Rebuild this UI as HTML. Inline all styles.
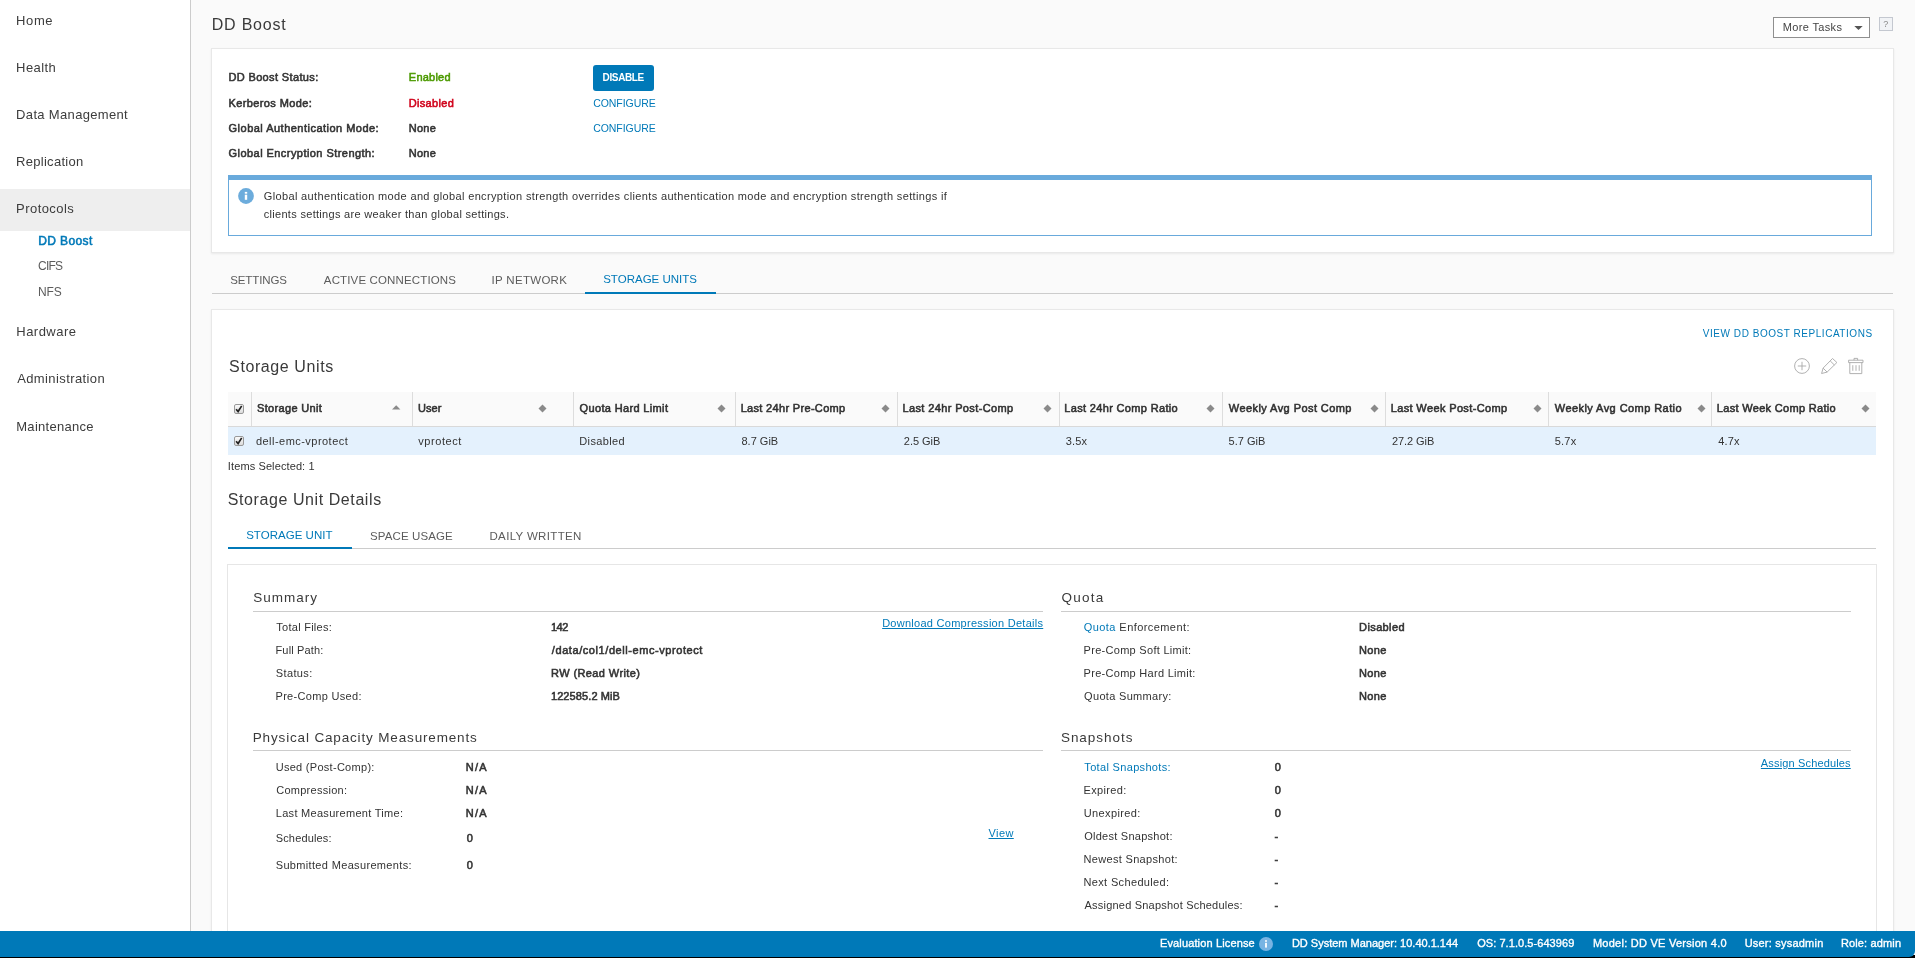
<!DOCTYPE html>
<html lang="en"><head><meta charset="utf-8"><title>DD System Manager - DD Boost</title>
<style>
html,body{margin:0;padding:0}
body{width:1915px;height:958px;overflow:hidden;position:relative;background:#fafafa;font-family:"Liberation Sans",sans-serif;color:#333}
#app{position:absolute;left:0;top:0;width:1915px;height:958px;overflow:hidden;will-change:transform}
.a{position:absolute}
.t{position:absolute;white-space:nowrap;line-height:1;margin:0;padding:0;font-weight:400;text-decoration:none;display:block}
nav,main,section,header,footer,ul,li{display:block;margin:0;padding:0;list-style:none}
.sb{-webkit-text-stroke:0.55px}
.card{position:absolute;background:#fff;border:1px solid #e8e8e8;box-shadow:0 1px 2px rgba(0,0,0,.07);box-sizing:border-box}
.ln{position:absolute;height:1px;background:#ccc}
.sep{position:absolute;top:392px;width:1px;height:34px;background:#ddd}
.cb{position:absolute;left:234px;width:10px;height:10px;box-sizing:border-box;border:1px solid #999;border-radius:2px;background:linear-gradient(#fafafa,#dcdcdc)}
.cb svg{position:absolute;left:-2px;top:-2px}
</style></head>
<body><div id="app">
<nav id="sidenav" aria-label="Main navigation">
<div class="a" style="left:0;top:0;width:190px;height:931px;background:#fff;border-right:1px solid #ccc"></div>
<div class="a" style="left:0;top:189px;width:190px;height:42px;background:#eee"></div>
<a class="t" style="left:16.12px;top:14px;font-size:13px;color:#3c3c3c;letter-spacing:0.601px">Home</a>
<a class="t" style="left:16.12px;top:61px;font-size:13px;color:#3c3c3c;letter-spacing:0.428px">Health</a>
<a class="t" style="left:16.12px;top:108px;font-size:13px;color:#3c3c3c;letter-spacing:0.333px">Data Management</a>
<a class="t" style="left:16.12px;top:155px;font-size:13px;color:#3c3c3c;letter-spacing:0.276px">Replication</a>
<a class="t" style="left:16.12px;top:202px;font-size:13px;color:#3c3c3c;letter-spacing:0.429px">Protocols</a>
<a class="t sb" style="left:38.34px;top:235px;font-size:12px;color:#0079b8;letter-spacing:0.371px">DD Boost</a>
<a class="t" style="left:38.05px;top:260px;font-size:12px;color:#5c5c5c;letter-spacing:-0.751px">CIFS</a>
<a class="t" style="left:37.94px;top:286px;font-size:12px;color:#5c5c5c;letter-spacing:-0.111px">NFS</a>
<a class="t" style="left:16.27px;top:325px;font-size:13px;color:#3c3c3c;letter-spacing:0.472px">Hardware</a>
<a class="t" style="left:17.13px;top:372px;font-size:13px;color:#3c3c3c;letter-spacing:0.399px">Administration</a>
<a class="t" style="left:16.27px;top:420px;font-size:13px;color:#3c3c3c;letter-spacing:0.278px">Maintenance</a>
</nav>
<main id="content">
<header id="page-header">
<div class="a" style="left:1773px;top:17px;width:97px;height:21px;box-sizing:border-box;border:1px solid #8f8f8f;background:#fff"></div>
<svg class="a" style="left:1854px;top:26px" width="9" height="4" viewBox="0 0 9 4"><path d="M0.3 0h8.4L4.5 4z" fill="#555"/></svg>
<div class="a" style="left:1879px;top:17px;width:14px;height:14px;box-sizing:border-box;border:1px solid #c4c8d0;background:#f1f3f6"></div>
<h1 class="t" style="left:211.66px;top:17px;font-size:16px;color:#3a3a3a;letter-spacing:0.808px">DD Boost</h1>
<span class="t" role="button" style="left:1782.68px;top:22px;font-size:11px;color:#444;letter-spacing:0.364px">More Tasks</span>
<span class="t" role="button" style="left:1883.20px;top:20px;font-size:9px;color:#8a8a8a">?</span>
</header>
<section id="boost-status" aria-label="DD Boost status">
<div class="card" style="left:211px;top:48px;width:1683px;height:205px"></div>
<div class="a" style="left:593px;top:65px;width:61px;height:26px;border-radius:3px;background:#0079b8"></div>
<div class="a" style="left:228px;top:175px;width:1644px;height:61px;box-sizing:border-box;border:1px solid #69aadc;border-top-width:5px;background:#fff"></div>
<svg class="a" style="left:238px;top:188px" width="16" height="16" viewBox="0 0 16 16"><circle cx="8" cy="8" r="7.9" fill="#6cacdc"/><rect x="6.8" y="3.9" width="2.4" height="1.8" fill="#fff"/><rect x="6.8" y="6.7" width="2.4" height="5.1" fill="#fff"/></svg>
<span class="t sb" style="left:228.41px;top:72px;font-size:11px;color:#333;letter-spacing:0.364px">DD Boost Status:</span>
<span class="t sb" style="left:228.42px;top:98px;font-size:11px;color:#333;letter-spacing:0.400px">Kerberos Mode:</span>
<span class="t sb" style="left:228.59px;top:123px;font-size:11px;color:#333;letter-spacing:0.481px">Global Authentication Mode:</span>
<span class="t sb" style="left:228.59px;top:148px;font-size:11px;color:#333;letter-spacing:0.443px">Global Encryption Strength:</span>
<span class="t sb" style="left:408.82px;top:72px;font-size:11px;color:#4c9a00;letter-spacing:0.232px">Enabled</span>
<span class="t sb" style="left:408.66px;top:98px;font-size:11px;color:#d0021b;letter-spacing:0.357px">Disabled</span>
<span class="t sb" style="left:408.67px;top:123px;font-size:11px;color:#333;letter-spacing:0.283px">None</span>
<span class="t sb" style="left:408.67px;top:148px;font-size:11px;color:#333;letter-spacing:0.283px">None</span>
<span class="t" role="button" style="left:602.56px;top:73px;font-size:10px;color:#fff;letter-spacing:-0.358px;font-weight:700">DISABLE</span>
<a class="t" style="left:593.15px;top:98px;font-size:10.5px;color:#0079b8;letter-spacing:-0.047px">CONFIGURE</a>
<a class="t" style="left:593.15px;top:123px;font-size:10.5px;color:#0079b8;letter-spacing:-0.047px">CONFIGURE</a>
<p class="t" style="left:263.78px;top:191px;font-size:11px;color:#333;letter-spacing:0.358px">Global authentication mode and global encryption strength overrides clients authentication mode and encryption strength settings if</p>
<p class="t" style="left:263.71px;top:209px;font-size:11px;color:#333;letter-spacing:0.307px">clients settings are weaker than global settings.</p>
</section>
<nav id="boost-tabs" role="tablist">
<div class="ln" style="left:212px;top:293px;width:1681px"></div>
<div class="a" style="left:585px;top:292px;width:131px;height:2px;background:#0079b8"></div>
<a class="t" role="tab" style="left:230.19px;top:275px;font-size:11.5px;color:#5c5c5c;letter-spacing:-0.109px">SETTINGS</a>
<a class="t" role="tab" style="left:323.87px;top:275px;font-size:11.5px;color:#5c5c5c;letter-spacing:0.142px">ACTIVE CONNECTIONS</a>
<a class="t" role="tab" style="left:491.60px;top:275px;font-size:11.5px;color:#5c5c5c;letter-spacing:0.297px">IP NETWORK</a>
<a class="t" role="tab" style="left:603.20px;top:274px;font-size:11.5px;color:#0079b8;letter-spacing:0.008px">STORAGE UNITS</a>
</nav>
<section id="storage-units" role="tabpanel">
<div class="card" style="left:211px;top:309px;width:1683px;height:700px"></div>
<svg class="a" style="left:1793px;top:357px" width="18" height="18" viewBox="0 0 18 18" fill="none" stroke="#a8a8a8" stroke-width="0.9"><circle cx="9" cy="9" r="7.4"/><path d="M9 4.8v8.4M4.8 9h8.4"/></svg>
<svg class="a" style="left:1820px;top:357px" width="18" height="18" viewBox="0 0 18 18" fill="none" stroke="#a8a8a8" stroke-width="0.9" stroke-linejoin="round"><path d="M1.6 16.5L3.1 11.1L12.5 1.5L16.9 5.5L7.1 15.1z"/><path d="M3.1 11.1L7.1 15.1M10.3 4L14.4 8"/></svg>
<svg class="a" style="left:1847px;top:357px" width="18" height="18" viewBox="0 0 18 18" fill="none" stroke="#a8a8a8" stroke-width="0.9"><path d="M1.6 3.2h14.4v2.4H1.6z"/><path d="M7 3.2V1.4h3.6v1.8"/><path d="M2.8 5.6v11h12v-11"/><path d="M5.8 8.2v5.6M9 8.2v5.6M12.2 8.2v5.6"/></svg>
<a class="t" style="left:1702.85px;top:329px;font-size:10px;color:#0079b8;letter-spacing:0.539px">VIEW DD BOOST REPLICATIONS</a>
<h2 class="t" style="left:229.12px;top:359px;font-size:16px;color:#3a3a3a;letter-spacing:0.595px">Storage Units</h2>
<div id="su-grid" role="table" aria-label="Storage Units">
<div role="row" class="su-head">
<div class="a" style="left:228px;top:392px;width:1648px;height:34px;background:#fafafa;border-bottom:1px solid #d9d9d9"></div>
<div class="sep" style="left:251px"></div>
<div class="sep" style="left:412px"></div>
<div class="sep" style="left:573px"></div>
<div class="sep" style="left:735px"></div>
<div class="sep" style="left:897px"></div>
<div class="sep" style="left:1059px"></div>
<div class="sep" style="left:1222px"></div>
<div class="sep" style="left:1385px"></div>
<div class="sep" style="left:1548px"></div>
<div class="sep" style="left:1711px"></div>
<svg class="a" style="left:392px;top:405px" width="9" height="5" viewBox="0 0 9 5"><path d="M0 4.6h8.4L4.2 0.2z" fill="#8a8a8a"/></svg>
<svg class="a" style="left:538.2px;top:404px" width="9" height="9" viewBox="0 0 9 9"><path d="M4.5 0.5l4 4-4 4-4-4z" fill="#8a8a8a"/></svg>
<svg class="a" style="left:717.3px;top:404px" width="9" height="9" viewBox="0 0 9 9"><path d="M4.5 0.5l4 4-4 4-4-4z" fill="#8a8a8a"/></svg>
<svg class="a" style="left:880.8px;top:404px" width="9" height="9" viewBox="0 0 9 9"><path d="M4.5 0.5l4 4-4 4-4-4z" fill="#8a8a8a"/></svg>
<svg class="a" style="left:1043.1px;top:404px" width="9" height="9" viewBox="0 0 9 9"><path d="M4.5 0.5l4 4-4 4-4-4z" fill="#8a8a8a"/></svg>
<svg class="a" style="left:1206.2px;top:404px" width="9" height="9" viewBox="0 0 9 9"><path d="M4.5 0.5l4 4-4 4-4-4z" fill="#8a8a8a"/></svg>
<svg class="a" style="left:1370.1px;top:404px" width="9" height="9" viewBox="0 0 9 9"><path d="M4.5 0.5l4 4-4 4-4-4z" fill="#8a8a8a"/></svg>
<svg class="a" style="left:1533.3px;top:404px" width="9" height="9" viewBox="0 0 9 9"><path d="M4.5 0.5l4 4-4 4-4-4z" fill="#8a8a8a"/></svg>
<svg class="a" style="left:1696.5px;top:404px" width="9" height="9" viewBox="0 0 9 9"><path d="M4.5 0.5l4 4-4 4-4-4z" fill="#8a8a8a"/></svg>
<svg class="a" style="left:1861.1px;top:404px" width="9" height="9" viewBox="0 0 9 9"><path d="M4.5 0.5l4 4-4 4-4-4z" fill="#8a8a8a"/></svg>
<div class="cb" style="top:404px"><svg width="12" height="12" viewBox="0 0 12 12"><path d="M3.1 6.2l2 2.3 3.6-5.6" fill="none" stroke="#222" stroke-width="1.7"/></svg></div>
<div class="t sb" role="columnheader" style="left:256.96px;top:403px;font-size:11px;color:#313131;letter-spacing:0.337px">Storage Unit</div>
<div class="t sb" role="columnheader" style="left:418.12px;top:403px;font-size:11px;color:#313131">User</div>
<div class="t sb" role="columnheader" style="left:579.55px;top:403px;font-size:11px;color:#313131;letter-spacing:0.352px">Quota Hard Limit</div>
<div class="t sb" role="columnheader" style="left:740.68px;top:403px;font-size:11px;color:#313131;letter-spacing:0.321px">Last 24hr Pre-Comp</div>
<div class="t sb" role="columnheader" style="left:902.50px;top:403px;font-size:11px;color:#313131;letter-spacing:0.372px">Last 24hr Post-Comp</div>
<div class="t sb" role="columnheader" style="left:1064.28px;top:403px;font-size:11px;color:#313131;letter-spacing:0.339px">Last 24hr Comp Ratio</div>
<div class="t sb" role="columnheader" style="left:1228.78px;top:403px;font-size:11px;color:#313131;letter-spacing:0.431px">Weekly Avg Post Comp</div>
<div class="t sb" role="columnheader" style="left:1390.68px;top:403px;font-size:11px;color:#313131;letter-spacing:0.368px">Last Week Post-Comp</div>
<div class="t sb" role="columnheader" style="left:1554.78px;top:403px;font-size:11px;color:#313131;letter-spacing:0.432px">Weekly Avg Comp Ratio</div>
<div class="t sb" role="columnheader" style="left:1716.79px;top:403px;font-size:11px;color:#313131;letter-spacing:0.315px">Last Week Comp Ratio</div>
</div>
<div role="row" class="su-row" aria-selected="true">
<div class="a" style="left:228px;top:427px;width:1648px;height:28px;background:#e4f1fd"></div>
<div class="cb" style="top:436px"><svg width="12" height="12" viewBox="0 0 12 12"><path d="M3.1 6.2l2 2.3 3.6-5.6" fill="none" stroke="#222" stroke-width="1.7"/></svg></div>
<div class="t" role="cell" style="left:255.94px;top:436px;font-size:11px;color:#333;letter-spacing:0.465px">dell-emc-vprotect</div>
<div class="t" role="cell" style="left:418.30px;top:436px;font-size:11px;color:#333;letter-spacing:0.554px">vprotect</div>
<div class="t" role="cell" style="left:579.27px;top:436px;font-size:11px;color:#333;letter-spacing:0.365px">Disabled</div>
<div class="t" role="cell" style="left:741.47px;top:436px;font-size:11px;color:#333;letter-spacing:0.009px">8.7 GiB</div>
<div class="t" role="cell" style="left:903.86px;top:436px;font-size:11px;color:#333;letter-spacing:-0.042px">2.5 GiB</div>
<div class="t" role="cell" style="left:1065.69px;top:436px;font-size:11px;color:#333;letter-spacing:0.194px">3.5x</div>
<div class="t" role="cell" style="left:1228.54px;top:436px;font-size:11px;color:#333;letter-spacing:0.012px">5.7 GiB</div>
<div class="t" role="cell" style="left:1391.99px;top:436px;font-size:11px;color:#333;letter-spacing:-0.082px">27.2 GiB</div>
<div class="t" role="cell" style="left:1554.69px;top:436px;font-size:11px;color:#333;letter-spacing:0.235px">5.7x</div>
<div class="t" role="cell" style="left:1718.20px;top:436px;font-size:11px;color:#333;letter-spacing:0.140px">4.7x</div>
</div>
</div>
<span class="t" style="left:227.86px;top:461px;font-size:11px;color:#333;letter-spacing:0.107px">Items Selected: 1</span>
<section id="su-details" aria-label="Storage Unit Details">
<div class="ln" style="left:228px;top:548px;width:1648px"></div>
<div class="a" style="left:228px;top:547px;width:124px;height:2px;background:#0079b8"></div>
<div class="a" style="left:227px;top:564px;width:1650px;height:420px;box-sizing:border-box;border:1px solid #e6e6e6;background:#fff"></div>
<div class="ln" style="left:253px;top:611px;width:790px"></div>
<div class="ln" style="left:1061px;top:611px;width:790px"></div>
<div class="ln" style="left:253px;top:750px;width:790px"></div>
<div class="ln" style="left:1061px;top:750px;width:790px"></div>
<h2 class="t" style="left:227.74px;top:492px;font-size:16px;color:#3a3a3a;letter-spacing:0.585px">Storage Unit Details</h2>
<a class="t" role="tab" style="left:246.18px;top:530px;font-size:11.5px;color:#0079b8;letter-spacing:0.023px">STORAGE UNIT</a>
<a class="t" role="tab" style="left:369.96px;top:531px;font-size:11.5px;color:#5c5c5c;letter-spacing:0.124px">SPACE USAGE</a>
<a class="t" role="tab" style="left:489.47px;top:531px;font-size:11.5px;color:#5c5c5c;letter-spacing:0.341px">DAILY WRITTEN</a>
<h3 class="t" style="left:253.27px;top:591px;font-size:13.5px;color:#3a3a3a;letter-spacing:0.980px">Summary</h3>
<h3 class="t" style="left:1061.38px;top:591px;font-size:13.5px;color:#3a3a3a;letter-spacing:1.285px">Quota</h3>
<h3 class="t" style="left:252.78px;top:731px;font-size:13.5px;color:#3a3a3a;letter-spacing:0.844px">Physical Capacity Measurements</h3>
<h3 class="t" style="left:1060.95px;top:731px;font-size:13.5px;color:#3a3a3a;letter-spacing:0.962px">Snapshots</h3>
<span class="t" style="left:276.34px;top:622px;font-size:11px;color:#333;letter-spacing:0.258px">Total Files:</span>
<span class="t" style="left:275.49px;top:645px;font-size:11px;color:#333;letter-spacing:0.164px">Full Path:</span>
<span class="t" style="left:275.71px;top:668px;font-size:11px;color:#333;letter-spacing:0.390px">Status:</span>
<span class="t" style="left:275.49px;top:691px;font-size:11px;color:#333;letter-spacing:0.313px">Pre-Comp Used:</span>
<span class="t sb" style="left:550.94px;top:622px;font-size:11px;color:#333;letter-spacing:-0.448px">142</span>
<span class="t sb" style="left:551.83px;top:645px;font-size:11px;color:#333;letter-spacing:0.572px">/data/col1/dell-emc-vprotect</span>
<span class="t sb" style="left:551.01px;top:668px;font-size:11px;color:#333;letter-spacing:0.403px">RW (Read Write)</span>
<span class="t sb" style="left:550.94px;top:691px;font-size:11px;color:#333;letter-spacing:0.100px">122585.2 MiB</span>
<a class="t" style="left:882.17px;top:618px;font-size:11px;color:#0079b8;letter-spacing:0.272px;text-decoration:underline">Download Compression Details</a>
<span class="t" style="left:275.67px;top:762px;font-size:11px;color:#333;letter-spacing:0.287px">Used (Post-Comp):</span>
<span class="t" style="left:276.19px;top:785px;font-size:11px;color:#333;letter-spacing:0.267px">Compression:</span>
<span class="t" style="left:275.80px;top:808px;font-size:11px;color:#333;letter-spacing:0.291px">Last Measurement Time:</span>
<span class="t" style="left:275.72px;top:833px;font-size:11px;color:#333;letter-spacing:0.157px">Schedules:</span>
<span class="t" style="left:275.71px;top:860px;font-size:11px;color:#333;letter-spacing:0.339px">Submitted Measurements:</span>
<span class="t sb" style="left:465.79px;top:762px;font-size:11px;color:#333;letter-spacing:1.197px">N/A</span>
<span class="t sb" style="left:465.79px;top:785px;font-size:11px;color:#333;letter-spacing:1.197px">N/A</span>
<span class="t sb" style="left:465.79px;top:808px;font-size:11px;color:#333;letter-spacing:1.197px">N/A</span>
<span class="t sb" style="left:466.72px;top:833px;font-size:11px;color:#333">0</span>
<span class="t sb" style="left:466.72px;top:860px;font-size:11px;color:#333">0</span>
<a class="t" style="left:988.50px;top:828px;font-size:11px;color:#0079b8;letter-spacing:0.404px;text-decoration:underline">View</a>
<span class="t" style="left:1083.80px;top:622px;font-size:11px;color:#333;letter-spacing:0.425px"><span style="color:#0079b8">Quota</span> Enforcement:</span>
<span class="t" style="left:1083.62px;top:645px;font-size:11px;color:#333;letter-spacing:0.285px">Pre-Comp Soft Limit:</span>
<span class="t" style="left:1083.62px;top:668px;font-size:11px;color:#333;letter-spacing:0.283px">Pre-Comp Hard Limit:</span>
<span class="t" style="left:1084.08px;top:691px;font-size:11px;color:#333;letter-spacing:0.317px">Quota Summary:</span>
<span class="t sb" style="left:1359.11px;top:622px;font-size:11px;color:#333;letter-spacing:0.377px">Disabled</span>
<span class="t sb" style="left:1359.11px;top:645px;font-size:11px;color:#333;letter-spacing:0.301px">None</span>
<span class="t sb" style="left:1359.11px;top:668px;font-size:11px;color:#333;letter-spacing:0.301px">None</span>
<span class="t sb" style="left:1359.11px;top:691px;font-size:11px;color:#333;letter-spacing:0.301px">None</span>
<span class="t" style="left:1084.36px;top:762px;font-size:11px;color:#0079b8;letter-spacing:0.323px">Total Snapshots:</span>
<span class="t" style="left:1083.49px;top:785px;font-size:11px;color:#333;letter-spacing:0.349px">Expired:</span>
<span class="t" style="left:1083.68px;top:808px;font-size:11px;color:#333;letter-spacing:0.393px">Unexpired:</span>
<span class="t" style="left:1084.17px;top:831px;font-size:11px;color:#333;letter-spacing:0.260px">Oldest Snapshot:</span>
<span class="t" style="left:1083.50px;top:854px;font-size:11px;color:#333;letter-spacing:0.322px">Newest Snapshot:</span>
<span class="t" style="left:1083.50px;top:877px;font-size:11px;color:#333;letter-spacing:0.349px">Next Scheduled:</span>
<span class="t" style="left:1084.54px;top:900px;font-size:11px;color:#333;letter-spacing:0.211px">Assigned Snapshot Schedules:</span>
<span class="t sb" style="left:1274.72px;top:762px;font-size:11px;color:#333">0</span>
<span class="t sb" style="left:1274.72px;top:785px;font-size:11px;color:#333">0</span>
<span class="t sb" style="left:1274.72px;top:808px;font-size:11px;color:#333">0</span>
<span class="t sb" style="left:1274.61px;top:831px;font-size:11px;color:#333">-</span>
<span class="t sb" style="left:1274.61px;top:854px;font-size:11px;color:#333">-</span>
<span class="t sb" style="left:1274.61px;top:877px;font-size:11px;color:#333">-</span>
<span class="t sb" style="left:1274.61px;top:900px;font-size:11px;color:#333">-</span>
<a class="t" style="left:1760.83px;top:758px;font-size:11px;color:#0079b8;letter-spacing:0.155px;text-decoration:underline">Assign Schedules</a>
</section>
</section>
</main>
<footer id="status-bar">
<div class="a" style="left:0;top:955px;width:1915px;height:3px;background:#000"></div>
<div class="a" style="left:0;top:931px;width:1915px;height:25.5px;background:#0079b8;border-bottom-right-radius:6px"></div>
<svg class="a" style="left:1259px;top:937px" width="14" height="14" viewBox="0 0 14 14"><circle cx="7" cy="7" r="7" fill="#78b4e3"/><rect x="6.1" y="3.2" width="1.8" height="1.6" fill="#fff"/><rect x="6.1" y="5.8" width="1.8" height="4.8" fill="#fff"/></svg>
<span class="t sb" style="left:1159.91px;top:938px;font-size:11px;color:#fff;letter-spacing:0.143px;-webkit-text-stroke-width:0.35px">Evaluation License</span>
<span class="t sb" style="left:1291.91px;top:938px;font-size:11px;color:#fff;-webkit-text-stroke-width:0.35px">DD System Manager: 10.40.1.144</span>
<span class="t sb" style="left:1477.18px;top:938px;font-size:11px;color:#fff;letter-spacing:0.064px;-webkit-text-stroke-width:0.35px">OS: 7.1.0.5-643969</span>
<span class="t sb" style="left:1592.92px;top:938px;font-size:11px;color:#fff;letter-spacing:0.257px;-webkit-text-stroke-width:0.35px">Model: DD VE Version 4.0</span>
<span class="t sb" style="left:1744.66px;top:938px;font-size:11px;color:#fff;letter-spacing:0.217px;-webkit-text-stroke-width:0.35px">User: sysadmin</span>
<span class="t sb" style="left:1840.91px;top:938px;font-size:11px;color:#fff;letter-spacing:0.141px;-webkit-text-stroke-width:0.35px">Role: admin</span>
</footer>
</div></body></html>
